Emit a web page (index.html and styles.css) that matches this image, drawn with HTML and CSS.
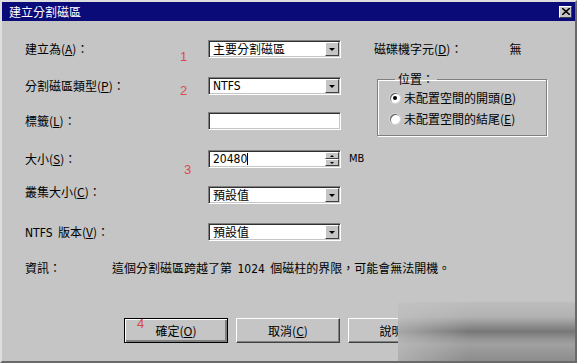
FILE: index.html
```html
<!DOCTYPE html>
<html lang="zh-Hant">

<head>
  <meta charset="UTF-8">
  <title>建立分割磁區</title>
  <link rel="stylesheet" href="styles.css">
</head>

<body>
  <div class="window">
    <div class="titlebar">
      <span class="title">建立分割磁區</span>
      <span class="close">
        <svg width="8" height="7" viewBox="0 0 8 7"><path d="M0 0 L8 7 M8 0 L0 7" stroke="#000" stroke-width="1.6"/></svg>
      </span>
    </div>

    <div class="form">
      <!-- row 1 -->
      <span class="lbl">建立為(<u>A</u>)：</span>
      <span class="mark mark-1">1</span>
      <div class="select"><span class="value">主要分割磁區</span><span class="drop"></span></div>
      <div class="drive"><span>磁碟機字元(<u>D</u>)：</span><span class="drive-val">無</span></div>

      <!-- row 2 -->
      <span class="lbl">分割磁區類型(<u>P</u>)：</span>
      <span class="mark mark-2">2</span>
      <div class="select"><span class="value latin">NTFS</span><span class="drop"></span></div>
      <fieldset class="group">
        <legend>位置：</legend>
        <div class="radio-row"><span class="radio checked"></span><span>未配置空間的開頭(<u>B</u>)</span></div>
        <div class="radio-row"><span class="radio"></span><span>未配置空間的結尾(<u>E</u>)</span></div>
      </fieldset>

      <!-- row 3 -->
      <span class="lbl">標籤(<u>L</u>)：</span>
      <span class="mark"></span>
      <div class="select"><span class="value"></span></div>

      <!-- row 4 -->
      <span class="lbl">大小(<u>S</u>)：</span>
      <span class="mark mark-3">3</span>
      <div class="select">
        <span class="value latin">20480<span class="caret"></span></span>
        <span class="spin"><span class="spin-up"></span><span class="spin-down"></span></span>
      </div>
      <span class="unit">MB</span>

      <!-- row 5 -->
      <span class="lbl lbl-up">叢集大小(<u>C</u>)：</span>
      <span class="mark"></span>
      <div class="select"><span class="value">預設值</span><span class="drop"></span></div>
      <span></span>

      <!-- row 6 -->
      <span class="lbl"><span class="latin">NTFS</span>&nbsp; 版本(<u>V</u>)：</span>
      <span class="mark"></span>
      <div class="select"><span class="value">預設值</span><span class="drop"></span></div>
      <span></span>
    </div>

    <div class="info">
      <span class="info-lbl">資訊：</span>
      <span>這個分割磁區跨越了第&nbsp; <span class="latin">1024</span>&nbsp; 個磁柱的界限，可能會無法開機。</span>
    </div>

    <div class="buttons">
      <button class="btn default">確定(<u>O</u>)<span class="mark mark-4">4</span></button>
      <button class="btn">取消(<u>C</u>)</button>
      <button class="btn">說明(<u>H</u>)</button>
    </div>

    <div class="watermark"></div>
  </div>
</body>

</html>
```

FILE: styles.css
```css
body {
  margin: 0;
  padding: 0;
  font-family: "Noto Sans CJK TC", "Liberation Sans", sans-serif;
  font-size: 12px;
  color: #000;
  background-color: #c5c5c5;
}

.window {
  position: relative;
  width: 577px;
  height: 363px;
  box-sizing: border-box;
  background-color: #c5c5c5;
  border-top: 2px solid #dedede;
  border-left: 2px solid #dedede;
  border-right: 2px solid #6a6a6a;
  border-bottom: 2px solid #6a6a6a;
  overflow: hidden;
}

.titlebar {
  height: 19px;
  background-color: #0a0a78;
  color: #ffffff;
  display: flex;
  align-items: center;
  justify-content: space-between;
  padding: 0 3px 0 7px;
}

.title {
  font-size: 12px;
  line-height: 19px;
}

.close {
  width: 13px;
  height: 12px;
  box-sizing: border-box;
  background-color: #c5c5c5;
  border: 1px solid;
  border-color: #fff #404040 #404040 #fff;
  display: flex;
  align-items: center;
  justify-content: center;
}

.form {
  display: grid;
  grid-template-columns: 155px 28px 133px 1fr;
  grid-template-rows: 37px 35px 38px 36px 37px 18px;
  margin-top: 19px;
  padding-left: 23px;
}

.lbl {
  height: 18px;
  line-height: 18px;
  white-space: nowrap;
}

.lbl-up {
  margin-top: -3px;
}

.latin {
  font-family: "DejaVu Sans Condensed", "Liberation Sans", sans-serif;
}

.mark {
  color: #d84a4a;
  font-family: "Liberation Sans", sans-serif;
  font-size: 13px;
  line-height: 13px;
}

.mark-1 {
  padding-top: 10px;
}

.mark-2 {
  padding-top: 7px;
}

.mark-3 {
  padding-top: 13px;
  padding-left: 4px;
}

.select {
  height: 18px;
  box-sizing: border-box;
  display: flex;
  background-color: #ffffff;
  border: 1px solid;
  border-color: #808080 #ffffff #ffffff #808080;
  box-shadow: inset 1px 1px 0 #303030, inset -1px -1px 0 #c5c5c5;
}

.value {
  flex: 1;
  padding-left: 4px;
  line-height: 16px;
  white-space: nowrap;
}

.caret {
  display: inline-block;
  width: 1px;
  height: 12px;
  background-color: #000;
  vertical-align: -2px;
}

.drop {
  width: 14px;
  margin: 1px 1px 1px 0;
  box-sizing: border-box;
  background-color: #c5c5c5;
  border: 1px solid;
  border-color: #ffffff #404040 #404040 #ffffff;
  display: flex;
  align-items: center;
  justify-content: center;
}

.drop::after {
  content: "";
  border-left: 3px solid transparent;
  border-right: 3px solid transparent;
  border-top: 3px solid #000;
}

.spin {
  width: 14px;
  margin: 1px 1px 1px 0;
  display: flex;
  flex-direction: column;
}

.spin-up,
.spin-down {
  flex: 1;
  box-sizing: border-box;
  background-color: #c5c5c5;
  border: 1px solid;
  border-color: #ffffff #404040 #404040 #ffffff;
  display: flex;
  align-items: center;
  justify-content: center;
}

.spin-up::after {
  content: "";
  border-left: 2px solid transparent;
  border-right: 2px solid transparent;
  border-bottom: 2px solid #000;
}

.spin-down::after {
  content: "";
  border-left: 2px solid transparent;
  border-right: 2px solid transparent;
  border-top: 2px solid #000;
}

.drive {
  display: flex;
  height: 18px;
  line-height: 18px;
  padding-left: 33px;
  white-space: nowrap;
}

.drive-val {
  margin-left: 47px;
}

.unit {
  height: 18px;
  line-height: 18px;
  padding-left: 8px;
  font-family: "DejaVu Sans Condensed", "Liberation Sans", sans-serif;
  font-size: 11px;
}

.group {
  grid-row: span 2;
  align-self: start;
  margin: -4px 0 0 36px;
  padding: 2px 0 0 12px;
  width: 170px;
  height: 63px;
  box-sizing: border-box;
  border: 1px solid #808080;
  box-shadow: 1px 1px 0 #ffffff, inset 1px 1px 0 #ffffff;
}

.group legend {
  padding: 0 3px;
  margin-left: 5px;
  line-height: 12px;
}

.radio-row {
  display: flex;
  align-items: center;
  gap: 4px;
  height: 21px;
  line-height: 14px;
  white-space: nowrap;
}

.radio {
  width: 10px;
  height: 10px;
  border-radius: 50%;
  background-color: #ffffff;
  box-shadow: inset 1px 1px 0 #606060, 0 0 0 1px #d8d8d8;
  display: flex;
  align-items: center;
  justify-content: center;
}

.radio.checked::after {
  content: "";
  width: 4px;
  height: 4px;
  border-radius: 50%;
  background-color: #000;
}

.info {
  display: flex;
  margin-top: 18px;
  padding-left: 23px;
  height: 18px;
  line-height: 18px;
  white-space: nowrap;
}

.info-lbl {
  width: 87px;
}

.buttons {
  display: flex;
  gap: 8px;
  margin-top: 41px;
  padding-left: 122px;
}

.btn {
  position: relative;
  width: 104px;
  height: 25px;
  padding: 0;
  font-family: inherit;
  font-size: 12px;
  color: #000;
  background-color: #c5c5c5;
  border: 1px solid;
  border-color: #ffffff #404040 #404040 #ffffff;
  box-shadow: inset -1px -1px 0 #808080;
}

.btn.default {
  border: 1px solid #000;
  box-shadow: inset 1px 1px 0 #ffffff, inset -2px -2px 0 #808080;
}

.mark-4 {
  position: absolute;
  left: 12px;
  top: -2px;
}

.watermark {
  position: absolute;
  left: 396px;
  top: 300px;
  right: 0;
  bottom: 0;
  background:
    linear-gradient(90deg, rgba(197, 197, 197, 0.6) 0%, rgba(197, 197, 197, 0) 40%),
    linear-gradient(180deg, #bdbdbd 0%, #b2b2b2 25%, #8a8a8a 42%, #787878 50%, #929292 62%, #a0a0a0 72%, #8c8c8c 100%);
}
```
